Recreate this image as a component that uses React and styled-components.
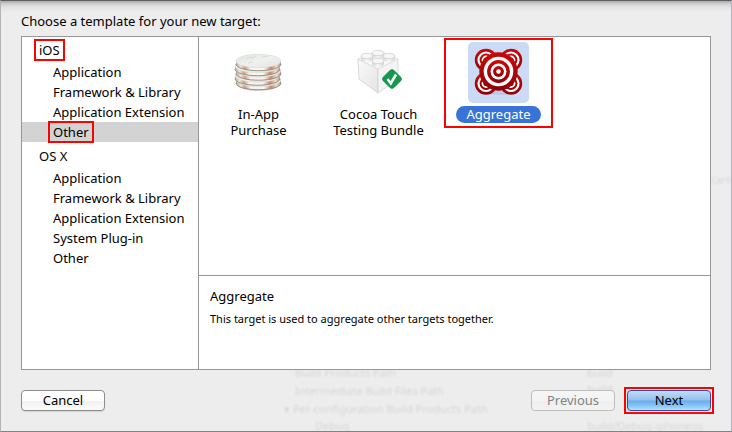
import React, { useState } from 'react'
import styled, { createGlobalStyle } from 'styled-components'

const GlobalStyle = createGlobalStyle`
    * {
        box-sizing: border-box;
    }

    body {
        margin: 0;
        background-color: #ededed;
        color: #000;
        font-family: "Lucida Grande", "Noto Sans", "Open Sans", sans-serif;
        font-size: 13px;
    }

    button {
        font: inherit;
        color: inherit;
    }
`;

const Sheet = styled.main`
    position: relative;
    display: flex;
    flex-direction: column;
    min-height: 100vh;
    padding: 10px 20px 20px;
    overflow: hidden;
    border: 1px solid #b4b4b8;
    border-top-color: #5f5b5f;
    border-bottom-color: #828282;
    background: linear-gradient(#a9a9a9, #cfcfcf 3px, #e2e2e2 6px, #ededed 11px);
`;

const Title = styled.h1`
    position: relative;
    margin: 0 0 5px;
    font-size: 13px;
    font-weight: 400;
    line-height: 20px;
`;

const Panel = styled.div`
    position: relative;
    flex: 1;
    display: grid;
    grid-template-columns: 177px 1fr;
    border: 1px solid #979797;
    background-color: #fff;
`;

const Sidebar = styled.nav`
    border-right: 1px solid #979797;
`;

const GroupName = styled.h2`
    display: flex;
    align-items: center;
    height: 25px;
    margin: 0;
    padding-left: 17px;
    font-size: 13px;
    font-weight: 400;
`;

const GroupList = styled.ul`
    margin: 0 0 1px;
    padding: 0;
    list-style: none;
`;

const Row = styled.button`
    display: flex;
    align-items: center;
    width: 100%;
    height: 20px;
    padding: 0 0 0 31px;
    border: 0;
    background-color: ${({ $active }) => ($active ? '#d3d3d3' : 'transparent')};
    white-space: nowrap;
`;

const Mark = styled.span`
    margin: 0 -3px;
    padding: 0 3px;
    line-height: 18px;
    outline: ${({ $on }) => ($on ? '2px solid #f00' : 'none')};
`;

const Content = styled.div`
    display: flex;
    flex-direction: column;
    min-width: 0;
`;

const Templates = styled.div`
    flex: 1;
    display: flex;
    flex-wrap: wrap;
    align-items: flex-start;
    gap: 11px;
    padding: 1px 5px;
`;

const Template = styled.button`
    display: flex;
    flex-direction: column;
    align-items: center;
    gap: 3px;
    width: 109px;
    min-height: 90px;
    padding: 4px 0 0;
    border: 0;
    background: none;
    outline: ${({ $active }) => ($active ? '2px solid #f00' : 'none')};
    outline-offset: -2px;
`;

const IconBox = styled.span`
    display: block;
    height: 61px;
    border-radius: 5px;
    background-color: ${({ $active }) => ($active ? '#cbdbf5' : 'transparent')};

    svg {
        display: block;
    }
`;

const Label = styled.span`
    padding: ${({ $active }) => ($active ? '0 10px' : '0')};
    border-radius: 9px;
    line-height: ${({ $active }) => ($active ? '17px' : '16px')};
    white-space: pre;
    color: ${({ $active }) => ($active ? '#fff' : '#000')};
    background-color: ${({ $active }) => ($active ? '#3873d7' : 'transparent')};
`;

const Details = styled.section`
    min-height: 94px;
    padding: 10px 11px;
    border-top: 1px solid #979797;

    h3 {
        margin: 0 0 5px;
        font-size: 13px;
        font-weight: 400;
        line-height: 20px;
    }

    p {
        margin: 0;
        font-size: 11px;
        line-height: 16px;
    }
`;

const Footer = styled.footer`
    position: relative;
    display: flex;
    align-items: center;
    gap: 9px;
    margin: 17px -3px -3px 0;
`;

const Button = styled.button`
    width: 84px;
    height: 21px;
    padding: 0;
    border: 1px solid #8d8d8d;
    border-radius: 4px;
    background: linear-gradient(#fff, #fdfdfd 50%, #f1f1f1 52%, #fbfbfb);
    box-shadow: 0 1px 1px #d4d4d4;
    line-height: 19px;

    &:first-child {
        margin-right: auto;
    }

    &:disabled {
        border-color: #bdbdbd;
        background: linear-gradient(#f6f6f6, #f4f4f4 50%, #efefef 52%, #f3f3f3);
        box-shadow: none;
        color: #828282;
    }
`;

const DefaultButton = styled(Button)`
    border-color: #42489b;
    background: linear-gradient(#c3dcf6, #92c1f0 48%, #69aceb 52%, #8ac7f8 80%, #b2e4ff);
`;

const ButtonMark = styled.div`
    display: flex;
    padding: 1px;
    border: 2px solid #f00;
`;

/* the window behind shows faintly through the sheet */
const Ghost = styled.span`
    position: absolute;
    left: ${({ $x }) => $x}px;
    top: ${({ $y }) => $y}px;
    color: #000;
    font-size: 11px;
    line-height: 16px;
    white-space: nowrap;
    opacity: 0.1;
    filter: blur(1px);
    pointer-events: none;
`;

const CoinsIcon = () => (
    <svg width="61" height="61" viewBox="0 0 61 61" aria-hidden="true">
        <defs>
            <linearGradient id="coinEdge">
                <stop offset="0" stopColor="#b5a598" />
                <stop offset="0.1" stopColor="#f3e4d8" />
                <stop offset="0.2" stopColor="#d39d7b" />
                <stop offset="0.32" stopColor="#fdf3ea" />
                <stop offset="0.62" stopColor="#fff6ee" />
                <stop offset="0.78" stopColor="#c88660" />
                <stop offset="0.9" stopColor="#f2d9c7" />
                <stop offset="1" stopColor="#ad9080" />
            </linearGradient>
            <linearGradient id="coinTop" x2="1" y2="1">
                <stop offset="0" stopColor="#e0e3df" />
                <stop offset="0.5" stopColor="#eff1ee" />
                <stop offset="1" stopColor="#e2e5e1" />
            </linearGradient>
        </defs>
        <ellipse cx="30" cy="42" rx="21" ry="7" fill="#8c8c86" opacity="0.4" />
        {[19, 14.5, 9.5, 5, 0].map((y, i) => (
            <g key={y} transform={`translate(${[0, -1, 0, -1, 0][i]} ${y})`}>
                <path d="M8 19v3c0 4 10 6.700 22.500 6.700s22.500-2.700 22.500-6.700V19z" fill="url(#coinEdge)" />
                <path d="M8 22c0 4 10 6.700 22.500 6.700s22.500-2.700 22.500-6.700" fill="none" stroke="#848b86" strokeWidth="0.900" />
                <ellipse cx="30.500" cy="19" rx="22.500" ry="6.700" fill="url(#coinTop)" stroke="#d3d7d2" strokeWidth="0.500" />
            </g>
        ))}
        <path d="M18 17l4-2 3 1 3-2M20 21l5-1M34 15l6-1" fill="none" stroke="#d0d4cf" strokeWidth="0.800" />
    </svg>
)

const BrickIcon = () => (
    <svg width="61" height="61" viewBox="0 0 61 61" aria-hidden="true">
        <defs>
            <linearGradient id="brickLeft" x2="1" y2="1">
                <stop offset="0" stopColor="#fafafa" />
                <stop offset="1" stopColor="#e4e4e4" />
            </linearGradient>
            <linearGradient id="brickStud">
                <stop offset="0" stopColor="#d4d4d4" />
                <stop offset="0.5" stopColor="#f6f6f6" />
                <stop offset="1" stopColor="#d2d2d2" />
            </linearGradient>
        </defs>
        <path d="M10 17l20 10v24L11 37z" fill="url(#brickLeft)" stroke="#cfcfcf" strokeWidth="0.800" />
        <path d="M50 17l-20 10v24l20-14z" fill="#f4f4f4" stroke="#d2d2d2" strokeWidth="0.800" />
        <path d="M10 17l20-8 20 8-20 10z" fill="#f8f8f8" stroke="#dcdcdc" strokeWidth="0.800" />
        {[[30, 11], [19, 14], [41, 14], [30, 19]].map(([x, y]) => (
            <g key={`${x}-${y}`}>
                <path d={`M${x - 6} ${y}v3a6 2.800 0 0 0 12 0v-3z`} fill="url(#brickStud)" />
                <ellipse cx={x} cy={y} rx="6" ry="2.700" fill="#f6f6f6" stroke="#cdcdcd" strokeWidth="0.700" />
            </g>
        ))}
        <rect x="36.500" y="29.500" width="15" height="15" rx="3" transform="rotate(45 44 37)" fill="#12994a" stroke="#0b7f3b" strokeWidth="0.600" />
        <path d="M39.500 37l3.300 4.500 5.200-9" fill="none" stroke="#fff" strokeWidth="2.600" />
    </svg>
)

const Target = ({ x, y, radii }) => radii.map((r, i) => (
    <circle key={r} cx={x} cy={y} r={r} fill={i % 2 ? '#fff' : 'url(#targetRed)'} />
))

const AggregateIcon = () => (
    <svg width="61" height="61" viewBox="0 0 61 61" aria-hidden="true">
        <defs>
            <linearGradient id="targetRed" x2="0" y2="1">
                <stop offset="0" stopColor="#cc0606" />
                <stop offset="1" stopColor="#8e0207" />
            </linearGradient>
        </defs>
        <ellipse cx="30.500" cy="50" rx="18" ry="3" fill="#7d8aa5" opacity="0.200" />
        {[[18, 18], [43, 18], [18, 41.5], [43, 41.5]].map(([x, y]) => (
            <Target key={`${x}-${y}`} x={x} y={y} radii={[11.2, 8.6, 6.4, 4.4, 2.6]} />
        ))}
        <Target x={30.5} y={29.5} radii={[19.2, 14.8, 11.4, 8, 5.4, 2.3]} />
    </svg>
)

const groups = [
    { name: 'iOS', items: ['Application', 'Framework & Library', 'Application Extension', 'Other'] },
    { name: 'OS X', items: ['Application', 'Framework & Library', 'Application Extension', 'System Plug-in', 'Other'] },
]

const templates = [
    { name: 'In-App\nPurchase', icon: CoinsIcon },
    { name: 'Cocoa Touch\nTesting Bundle', icon: BrickIcon },
    { name: 'Aggregate', icon: AggregateIcon },
]

const ghosts = [
    [294, 364, 'Build Products Path'],
    [294, 382, 'Intermediate Build Files Path'],
    [283, 400, '▾ Per-configuration Build Products Path'],
    [314, 417, 'Debug'],
    [586, 364, 'build'],
    [586, 380, 'build'],
    [586, 417, 'build/Debug-iphoneos'],
    [711, 171, '(arm'],
]

const App = () => {
    const [category, setCategory] = useState('iOS/Other')
    const [selected, setSelected] = useState('Aggregate')

    return (
        <>
            <GlobalStyle />
            <Sheet>
                <div aria-hidden="true">
                    {ghosts.map(([x, y, text]) => (
                        <Ghost key={`${x}-${y}`} $x={x} $y={y}>{text}</Ghost>
                    ))}
                </div>
                <Title>Choose a template for your new target:</Title>
                <Panel>
                    <Sidebar>
                        {groups.map(({ name, items }) => (
                            <div key={name}>
                                <GroupName>
                                    <Mark $on={category.startsWith(`${name}/`)}>{name}</Mark>
                                </GroupName>
                                <GroupList>
                                    {items.map((item) => {
                                        const id = `${name}/${item}`
                                        return (
                                            <li key={id}>
                                                <Row type="button" $active={id === category} onClick={() => setCategory(id)}>
                                                    <Mark $on={id === category}>{item}</Mark>
                                                </Row>
                                            </li>
                                        )
                                    })}
                                </GroupList>
                            </div>
                        ))}
                    </Sidebar>
                    <Content>
                        <Templates>
                            {templates.map(({ name, icon: Icon }) => {
                                const active = name === selected
                                return (
                                    <Template key={name} type="button" aria-pressed={active} $active={active} onClick={() => setSelected(name)}>
                                        <IconBox $active={active}><Icon /></IconBox>
                                        <Label $active={active}>{name}</Label>
                                    </Template>
                                )
                            })}
                        </Templates>
                        <Details>
                            <h3>Aggregate</h3>
                            <p>This target is used to aggregate other targets together.</p>
                        </Details>
                    </Content>
                </Panel>
                <Footer>
                    <Button type="button">Cancel</Button>
                    <Button type="button" disabled>Previous</Button>
                    <ButtonMark>
                        <DefaultButton type="button">Next</DefaultButton>
                    </ButtonMark>
                </Footer>
            </Sheet>
        </>
    )
}

export default App
